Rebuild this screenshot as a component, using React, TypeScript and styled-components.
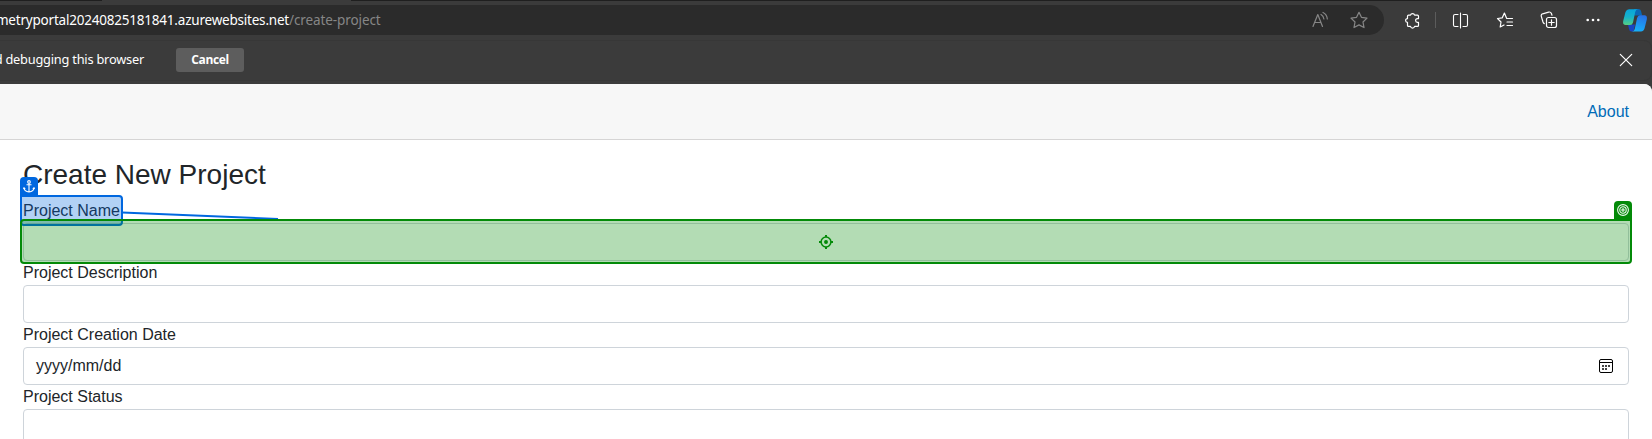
import React from "react";
import styled, { createGlobalStyle } from "styled-components";

const Global = createGlobalStyle`
  *, *::before, *::after { box-sizing: border-box; }
  body { margin: 0; background: #3b3b3b; overflow: hidden; }
`;

const Window = styled.div`
  width: 1652px;
  height: 439px;
  overflow: hidden;
  background: #3b3b3b;
  display: flex;
  flex-direction: column;
  font-family: "Noto Sans", "Open Sans", sans-serif;
`;

const TabStrip = styled.div`
  display: grid;
  grid-template-columns: 102px 249px 1fr;
  height: 1px;
  flex: none;
`;
const TabEdge = styled.span<{ $active?: boolean }>`
  background: ${(p) => (p.$active ? "#3b3b3b" : "#1f1f1f")};
`;

const Toolbar = styled.div`
  display: flex;
  align-items: center;
  height: 39px;
  padding: 4px 0 5px;
  flex: none;
`;
const AddressBar = styled.div`
  display: flex;
  align-items: center;
  width: 1384px;
  height: 30px;
  background: #2b2b2b;
  border-radius: 0 15px 15px 0;
  font-size: 13.5px;
  line-height: 20px;
  white-space: nowrap;
  color: #868686;
`;
const Host = styled.span`
  display: flex;
  justify-content: flex-end;
  width: 289px;
  color: #fff;
  letter-spacing: -0.21px;
`;
const Path = styled.span`
  flex: 1;
  letter-spacing: -0.1px;
`;
const BarIcons = styled.div`
  display: flex;
  align-items: center;
  gap: 20px;
  padding-right: 16px;
`;
const Actions = styled.div`
  display: flex;
  align-items: center;
  color: #fff;
`;
const ActionIcon = styled.span<{ $left: number }>`
  display: flex;
  margin-left: ${(p) => p.$left}px;
`;
const Separator = styled.span`
  width: 1px;
  height: 16px;
  margin-left: 14px;
  background: #5c5c5c;
`;

const InfoBar = styled.div`
  display: flex;
  align-items: center;
  height: 41px;
  flex: none;
  border: 1px solid #373737;
  border-left: 0;
  border-radius: 0 8px 8px 0;
  margin-bottom: 3px;
  padding-bottom: 1px;
  color: #fff;
  font-size: 13px;
`;
const InfoText = styled.span`
  display: flex;
  justify-content: flex-end;
  width: 144px;
  padding-bottom: 2px;
  white-space: nowrap;
  font-size: 12.8px;
  letter-spacing: -0.22px;
`;
const CancelButton = styled.button`
  width: 68px;
  height: 24px;
  margin-left: 32px;
  padding: 0;
  border: 0;
  border-radius: 3px;
  background: #5d5d5d;
  color: #fff;
  font: 700 12px/22px "Open Sans", sans-serif;
  letter-spacing: -0.4px;
`;
const CloseButton = styled.span`
  display: flex;
  margin-left: auto;
  padding-right: 18px;
`;

const Page = styled.main`
  flex: 1;
  min-height: 0;
  background: #fff;
  border-top-right-radius: 8px;
  overflow: hidden;
  font-family: "Liberation Sans", Arial, sans-serif;
  font-size: 16px;
  line-height: 24px;
  color: #212529;
`;
const TopRow = styled.header`
  display: flex;
  align-items: center;
  justify-content: flex-end;
  height: 56px;
  padding-right: 23px;
  background: #f7f7f7;
  border-bottom: 1px solid #d6d5d5;
`;
const AboutLink = styled.a`
  color: #006bb7;
`;
const Form = styled.form`
  padding: 18px 23px 0;
`;
const Title = styled.h3`
  margin: 0 0 7px;
  font-size: 28px;
  line-height: 34px;
  font-weight: 400;
`;
const Field = styled.div`
  position: relative;
`;
const Label = styled.label`
  display: block;
`;
const Control = styled.div`
  display: flex;
  align-items: center;
  justify-content: space-between;
  height: 38px;
  padding: 0 15px 0 12px;
  border: 1px solid #ced4da;
  border-radius: 4px;
`;

const AnchorHighlight = styled.div`
  position: absolute;
  left: -3px;
  top: -4px;
  width: 103px;
  height: 31px;
  border: 2px solid #0067df;
  border-radius: 0 4px 4px 4px;
  background: rgba(0, 103, 223, 0.3);
`;
const TargetHighlight = styled.div`
  position: absolute;
  left: -3px;
  right: -3px;
  top: 20px;
  height: 45px;
  display: flex;
  align-items: center;
  justify-content: center;
  border: 2px solid #038a08;
  border-radius: 4px 0 4px 4px;
  background: rgba(3, 140, 8, 0.3);
`;
const Badge = styled.span<{ $side: "left" | "right"; $color: string }>`
  position: absolute;
  ${(p) => p.$side}: -2px;
  top: -20px;
  width: 18px;
  height: 19px;
  display: flex;
  justify-content: center;
  padding-top: 3px;
  border-radius: 4px 4px 0 0;
  background: ${(p) => p.$color};
`;
const Connector = styled.svg`
  position: absolute;
  left: 99px;
  top: 11px;
`;

const stroke = {
  fill: "none",
  stroke: "currentColor",
  strokeLinecap: "round" as const,
  strokeLinejoin: "round" as const,
};

const ReadAloud = () => (
  <svg width="18" height="18" viewBox="0 0 18 18" {...stroke} strokeWidth="1.2">
    <path d="M1 15.5 5.8 3.5 10.500 15.500M2.700 11.500h6.200M9 3.500q2.600 1.400 2.900 4.500M11 1.500q4 2 4.300 6.500" />
  </svg>
);
const STAR = "M8 .9 10.2 5.4 15.2 6.1 11.6 9.6 12.5 14.6 8 12.2 3.5 14.6 4.4 9.6 .8 6.1 5.8 5.4Z";
const Star = () => (
  <svg width="18" height="18" viewBox="-.1 -.3 16.2 16.2" {...stroke} strokeWidth="1.100">
    <path d={STAR} />
  </svg>
);
const Puzzle = () => (
  <svg width="17" height="17" viewBox="0 0 17 17" {...stroke} strokeWidth="1.2">
    <path d="M4.500 3.200H6.500a2.100 2.100 0 0 1 4.100 0h2.900q1 0 1 1v2.400H13.500a1.900 1.900 0 0 0 0 3.800h1v3q0 1-1 1h-2.900a2.100 2.100 0 0 1-4.100 0H4.500q-1 0-1-1v-3a1.900 1.900 0 0 1 0-3.800V4.200q0-1 1-1Z" />
  </svg>
);
const Split = () => (
  <svg width="17" height="17" viewBox="0 0 17 17" {...stroke} strokeWidth="1.100">
    <path d="M8.500 1v15M6 2.500H3Q1.500 2.500 1.500 4v9q0 1.500 1.500 1.500H6M11 2.500h3Q15.500 2.500 15.500 4v9q0 1.500-1.500 1.500H11" />
  </svg>
);
const Favorites = () => (
  <svg width="18" height="18" viewBox="0 0 18 18" {...stroke} strokeWidth="1.200">
    <path d="M16.500 7.500h-5.800L8.400 2 6.300 6.800 1.500 7.500 5 11 4.200 16 8 14M11 11h5.500M11 14.500h5.500" />
  </svg>
);
const Collections = () => (
  <svg width="18" height="18" viewBox="0 0 18 18" {...stroke} strokeWidth="1.200">
    <path d="M4.300 12.600Q3.400 12.200 3 11L1.300 5.300Q.8 3.400 2.600 2.800L8.700 1.100Q10.500.6 11.300 2.300L12 4.200" />
    <rect x="6.500" y="6.500" width="10" height="10" rx="2" />
    <path d="M11.500 8.800v5.400M8.800 11.500h5.400" />
  </svg>
);
const More = () => (
  <svg width="14" height="4" viewBox="0 0 14 4" fill="currentColor">
    <circle cx="1.700" cy="2" r="1.300" />
    <circle cx="7" cy="2" r="1.300" />
    <circle cx="12.300" cy="2" r="1.300" />
  </svg>
);
const Copilot = () => (
  <svg width="24" height="23" viewBox="0 0 24 23">
    <defs>
      <linearGradient id="cpA" x1="0" y1="0" x2="0" y2="1">
        <stop offset="0" stopColor="#08a5dc" />
        <stop offset=".5" stopColor="#17b3c9" />
        <stop offset="1" stopColor="#55cf83" />
      </linearGradient>
      <linearGradient id="cpB" x1=".7" y1="0" x2=".4" y2="1">
        <stop offset="0" stopColor="#2870e5" />
        <stop offset="1" stopColor="#16b0f8" />
      </linearGradient>
    </defs>
    <path d="M11 0h4.500q2 0 2.500 2l1.200 4.500H11Z" fill="#0a67b5" />
    <path d="M5 15.500h7l-1.500 7H8.500Q6.500 22.500 6 20Z" fill="#1746c4" />
    <path d="M6 .3h9Q12.700.6 12.200 3L10 13.500Q9.300 16 7 16H2.500Q-.5 16 .2 12L2.500 3Q3.500.3 6 .3Z" fill="url(#cpA)" />
    <path d="M18 22.500H9q2.300-.300 2.800-2.700l2.300-10.800Q14.800 6.300 17 6.300h4.500Q24.500 6.300 23.800 10.500L21.500 19.500Q20.500 22.500 18 22.500Z" fill="url(#cpB)" />
  </svg>
);
const Close = () => (
  <svg width="14" height="14" viewBox="0 0 14 14" {...stroke} strokeWidth="1.200">
    <path d="M1.300 1.300 12.700 12.700M12.700 1.300 1.300 12.700" />
  </svg>
);
const AnchorIcon = () => (
  <svg width="12" height="13" viewBox="0 0 12 13" fill="none" stroke="#fff" strokeWidth="1.100">
    <circle cx="6" cy="1.900" r="1.300" />
    <path d="M6 3.200V12M3.500 4.800h5M1 8Q1.200 11.300 6 12 10.800 11.300 11 8M.4 9 1 7.800 2.300 8.600M9.700 8.600 11 7.800 11.600 9" />
  </svg>
);
const TargetIcon = () => (
  <svg width="12" height="12" viewBox="0 0 12 12" fill="none" stroke="#f0faf0" strokeWidth="1.100">
    <circle cx="6" cy="6" r="5.400" />
    <circle cx="6" cy="6" r="3.200" />
    <circle cx="6" cy="6" r="1.100" />
  </svg>
);
const Crosshair = () => (
  <svg width="14" height="14" viewBox="0 0 14 14" fill="none" stroke="#038a08" strokeWidth="1.500">
    <circle cx="7" cy="7" r="4.900" />
    <circle cx="7" cy="7" r="1.200" fill="#038a08" />
    <path d="M7 0v2M7 12v2M0 7h2M12 7h2" strokeWidth="2" />
  </svg>
);
const CalendarIcon = () => (
  <svg width="14" height="14" viewBox="0 0 14 14">
    <rect x=".5" y=".5" width="13" height="13" rx="1.500" fill="none" stroke="#000" />
    <path d="M1 3.500h12" stroke="#000" />
    <path d="M3 6h2v2H3zM6 6h2v2H6zM9 6h2v2H9zM3 9h2v2H3zM6 9h2v2H6z" fill="#444" />
  </svg>
);

export default function App() {
  return (
    <>
      <Global />
      <Window>
        <TabStrip>
          <TabEdge />
          <TabEdge $active />
          <TabEdge />
        </TabStrip>
        <Toolbar>
          <AddressBar>
            <Host>metryportal20240825181841.azurewebsites.net</Host>
            <Path>/create-project</Path>
            <BarIcons>
              <ReadAloud />
              <Star />
            </BarIcons>
          </AddressBar>
          <Actions>
            <ActionIcon $left={20}><Puzzle /></ActionIcon>
            <Separator />
            <ActionIcon $left={16}><Split /></ActionIcon>
            <ActionIcon $left={27}><Favorites /></ActionIcon>
            <ActionIcon $left={26}><Collections /></ActionIcon>
            <ActionIcon $left={28}><More /></ActionIcon>
            <ActionIcon $left={23}><Copilot /></ActionIcon>
          </Actions>
        </Toolbar>
        <InfoBar>
          <InfoText>d debugging this browser</InfoText>
          <CancelButton>Cancel</CancelButton>
          <CloseButton><Close /></CloseButton>
        </InfoBar>
        <Page>
          <TopRow>
            <AboutLink>About</AboutLink>
          </TopRow>
          <Form>
            <Title>Create New Project</Title>
            <Field>
              <Label>Project Name</Label>
              <Control />
              <Connector width="160" height="12" viewBox="0 0 160 12">
                <path d="M0 2.500 156 9" stroke="#0067df" strokeWidth="2" />
              </Connector>
              <AnchorHighlight>
                <Badge $side="left" $color="#0067df"><AnchorIcon /></Badge>
              </AnchorHighlight>
              <TargetHighlight>
                <Crosshair />
                <Badge $side="right" $color="#038a08"><TargetIcon /></Badge>
              </TargetHighlight>
            </Field>
            <Field>
              <Label>Project Description</Label>
              <Control />
            </Field>
            <Field>
              <Label>Project Creation Date</Label>
              <Control>
                <span>yyyy/mm/dd</span>
                <CalendarIcon />
              </Control>
            </Field>
            <Field>
              <Label>Project Status</Label>
              <Control />
            </Field>
          </Form>
        </Page>
      </Window>
    </>
  );
}
